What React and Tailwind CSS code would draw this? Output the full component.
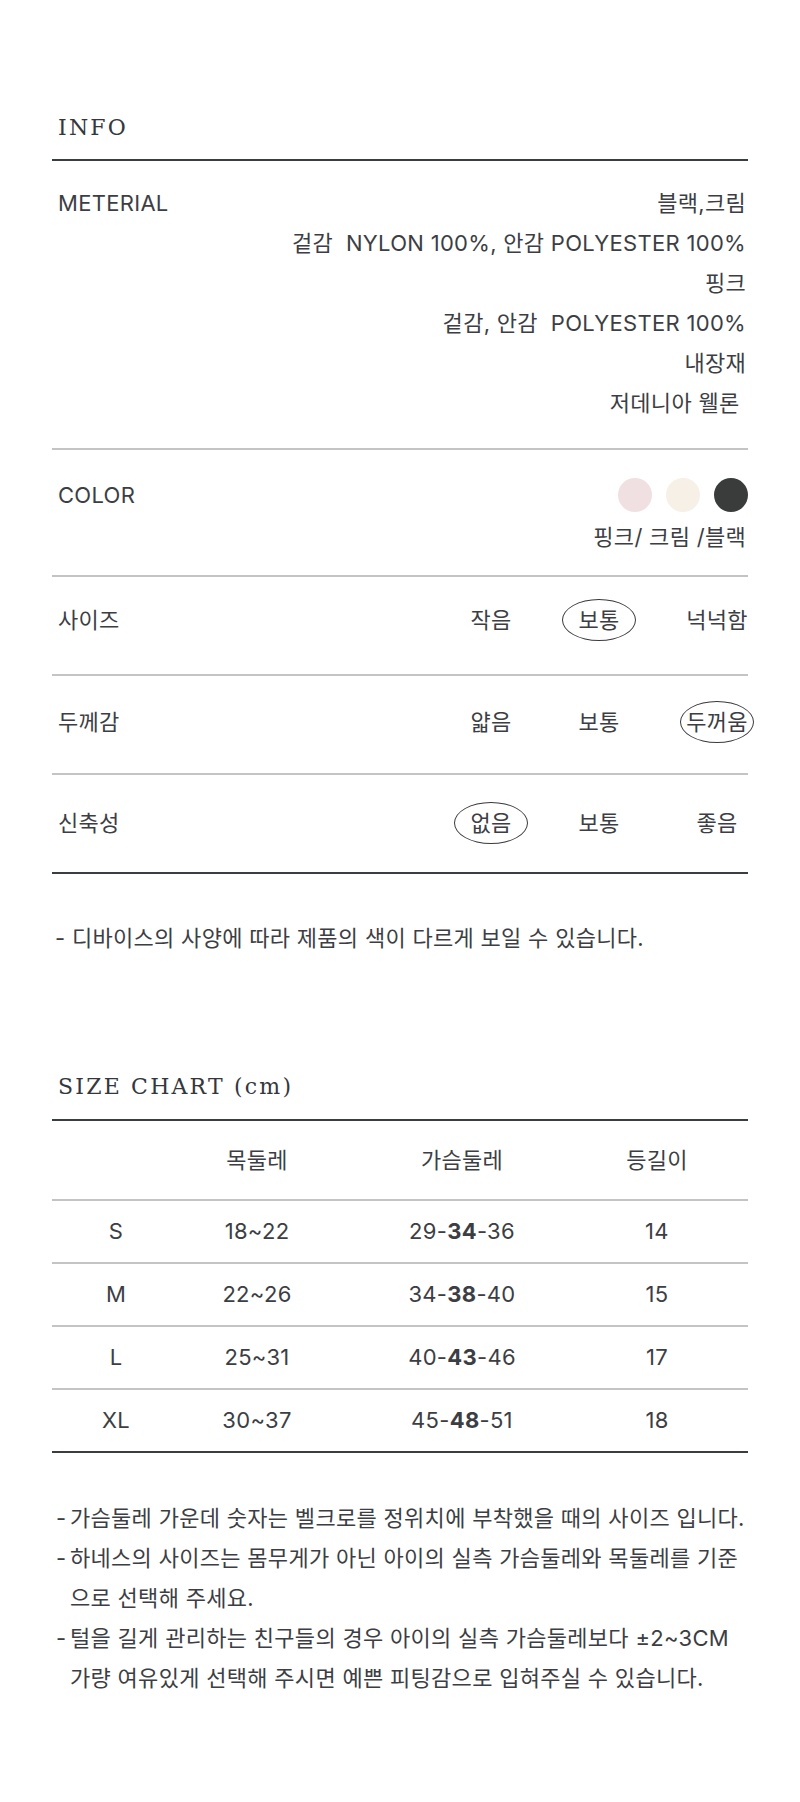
import React from 'react';

const materials = [
  '블랙,크림',
  '겉감  NYLON 100%, 안감 POLYESTER 100%',
  '핑크',
  '겉감, 안감  POLYESTER 100%',
  '내장재',
  '저데니아 웰론\u00a0',
];

const options = [
  { label: '사이즈', items: ['작음', '보통', '넉넉함'], selected: 1, pad: 'pt-[22px] pb-[33px]' },
  { label: '두께감', items: ['얇음', '보통', '두꺼움'], selected: 2, pad: 'pt-[25px] pb-[30px]' },
  { label: '신축성', items: ['없음', '보통', '좋음'], selected: 0, pad: 'pt-[27px] pb-[28px]' },
];

const sizes = [
  { size: 'S', neck: '18~22', chest: ['29-', '34', '-36'], back: '14' },
  { size: 'M', neck: '22~26', chest: ['34-', '38', '-40'], back: '15' },
  { size: 'L', neck: '25~31', chest: ['40-', '43', '-46'], back: '17' },
  { size: 'XL', neck: '30~37', chest: ['45-', '48', '-51'], back: '18' },
];

const App = () => {
  return (
    <div className="min-h-[1802px] bg-white px-[52px] pt-[114px] text-[22px] tracking-[0.3px] text-[#3c3e44] font-['Inter','Noto_Sans_CJK_KR',sans-serif]">
      {/* INFO */}
      <div className="border-b-2 border-[#3a3d44] pb-[17px] pl-[6px]">
        <h2 className="text-[22px] leading-[28px] tracking-[2.2px] font-['DejaVu_Serif',serif] text-[#34373d]">INFO</h2>
      </div>

      {/* Material */}
      <div className="flex justify-between border-b-2 border-[#c4c4c4] pt-[22px] pb-[25px] pl-[6px] pr-[2px]">
        <span className="leading-[40px]">METERIAL</span>
        <div className="text-right">
          {materials.map((m, i) => (
            <p key={i} className="leading-[40px] whitespace-pre">{m}</p>
          ))}
        </div>
      </div>

      {/* Color */}
      <div className="flex justify-between border-b-2 border-[#c4c4c4] pt-[28px] pb-[18px] pl-[6px] pr-[2px]">
        <span className="leading-[34px]">COLOR</span>
        <div className="flex flex-col items-end">
          <div className="flex gap-[14px] -mr-[2px]">
            <span className="w-[34px] h-[34px] rounded-full bg-[#f0e0e2]"></span>
            <span className="w-[34px] h-[34px] rounded-full bg-[#f7f0e6]"></span>
            <span className="w-[34px] h-[34px] rounded-full bg-[#3a3b3b]"></span>
          </div>
          <span className="mt-[5px] leading-[40px]">핑크/ 크림 /블랙</span>
        </div>
      </div>

      {/* Options */}
      {options.map((row, i) => (
        <div
          key={row.label}
          className={`flex items-center pl-[6px] border-b-2 ${row.pad} ${i === options.length - 1 ? 'border-[#3a3d44]' : 'border-[#c4c4c4]'}`}
        >
          <span className="leading-[42px]">{row.label}</span>
          <div className="ml-auto -mr-[6px] flex">
            {row.items.map((item, j) => (
              <span
                key={item}
                className={`w-[74px] h-[42px] flex items-center justify-center whitespace-nowrap ${j === 1 ? 'ml-[34px]' : ''} ${j === 2 ? 'ml-[44px]' : ''} ${row.selected === j ? 'border border-[#3a3a3a] rounded-[50%]' : ''}`}
              >
                {item}
              </span>
            ))}
          </div>
        </div>
      ))}

      <p className="mt-[44px] pl-[3px] leading-[40px]">- 디바이스의 사양에 따라 제품의 색이 다르게 보일 수 있습니다.</p>

      {/* Size chart */}
      <div className="mt-[115px] border-b-2 border-[#3a3d44] pb-[18px] pl-[6px]">
        <h2 className="text-[22px] leading-[28px] tracking-[2.2px] font-['DejaVu_Serif',serif] text-[#34373d]">SIZE CHART (cm)</h2>
      </div>

      <div className="grid grid-cols-[128px_154px_256px_134px] h-[80px] items-center text-center border-b-2 border-[#c4c4c4]">
        <span></span>
        <span>목둘레</span>
        <span>가슴둘레</span>
        <span>등길이</span>
      </div>
      {sizes.map((s, i) => (
        <div
          key={s.size}
          className={`grid grid-cols-[128px_154px_256px_134px] h-[63px] items-center text-center border-b-2 ${i === sizes.length - 1 ? 'border-[#3a3d44]' : 'border-[#c4c4c4]'}`}
        >
          <span>{s.size}</span>
          <span>{s.neck}</span>
          <span>
            {s.chest[0]}
            <b className="font-bold">{s.chest[1]}</b>
            {s.chest[2]}
          </span>
          <span>{s.back}</span>
        </div>
      ))}

      {/* Notes */}
      <div className="mt-[45px] pl-[4px] leading-[40px]">
        <div className="flex">
          <span className="w-[14px] shrink-0">-</span>
          <span>가슴둘레 가운데 숫자는 벨크로를 정위치에 부착했을 때의 사이즈 입니다.</span>
        </div>
        <div className="flex">
          <span className="w-[14px] shrink-0">-</span>
          <span>하네스의 사이즈는 몸무게가 아닌 아이의 실측 가슴둘레와 목둘레를 기준<br />으로 선택해 주세요.</span>
        </div>
        <div className="flex">
          <span className="w-[14px] shrink-0">-</span>
          <span>털을 길게 관리하는 친구들의 경우 아이의 실측 가슴둘레보다 ±2~3CM<br />가량 여유있게 선택해 주시면 예쁜 피팅감으로 입혀주실 수 있습니다.</span>
        </div>
      </div>
    </div>
  );
};

export default App;
